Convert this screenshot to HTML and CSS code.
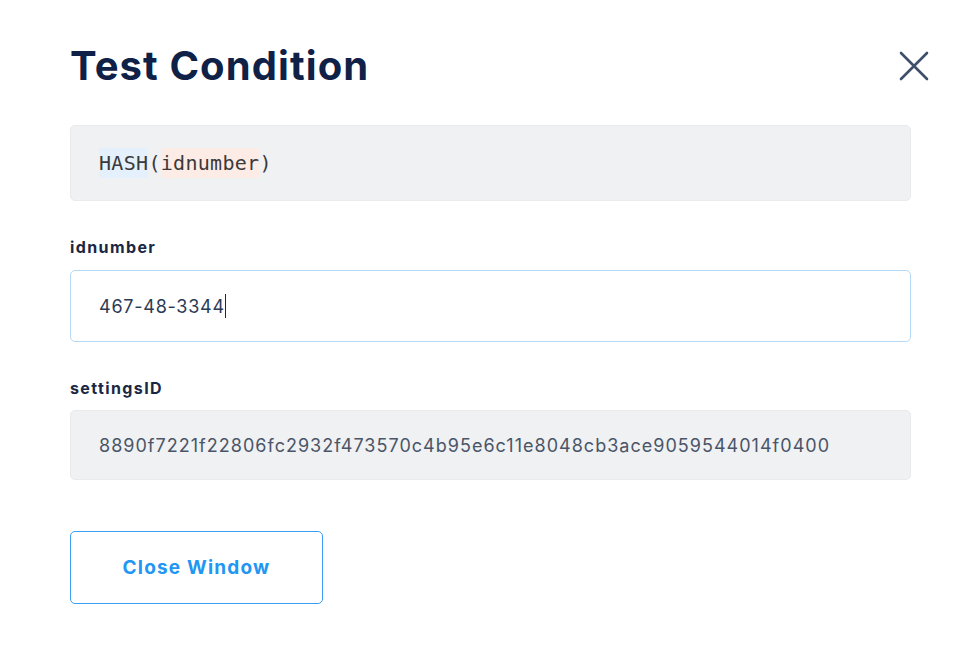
FILE: index.html
```html
<!DOCTYPE html>
<html lang="en">
<head>
<meta charset="utf-8">
<title>Test Condition</title>
<link rel="stylesheet" href="styles.css">
</head>
<body>
<div class="dialog">
  <div class="header">
    <h1 class="title">Test Condition</h1>
    <button class="close" aria-label="Close">
      <svg width="30" height="30" viewBox="0 0 30 30"><path d="M2 2 L28 28 M28 2 L2 28" stroke="#3d4f6b" stroke-width="2.6" stroke-linecap="round" fill="none"/></svg>
    </button>
  </div>
  <div class="code"><span class="fn">HASH</span>(<span class="arg">idnumber</span>)</div>
  <label class="label first">idnumber</label>
  <div class="input">467-48-3344<span class="caret"></span></div>
  <label class="label second">settingsID</label>
  <div class="readonly">8890f7221f22806fc2932f473570c4b95e6c11e8048cb3ace9059544014f0400</div>
  <div class="actions">
    <button class="btn">Close Window</button>
  </div>
</div>
</body>
</html>
```
FILE: styles.css
```css
html, body { margin: 0; padding: 0; background: #fff; }
body { font-family: Inter, "Open Sans", sans-serif; color: #1a2744; }
.dialog { padding: 38px 65px 0 70px; }
.header { display: flex; align-items: center; justify-content: space-between; margin-right: -18px; height: 56px; }
.title { margin: 0; font-size: 40px; font-weight: 700; color: #0f2147; letter-spacing: 1.1px; line-height: 56px; }
.close { background: none; border: 0; padding: 0; width: 30px; height: 30px; cursor: pointer; display: flex; }
.code { margin-top: 31px; height: 76px; box-sizing: border-box; background: #f0f1f3; border: 1px solid #e9eaec; border-radius: 5px; padding: 0 28px; display: flex; align-items: center; font-family: "DejaVu Sans Mono", monospace; font-size: 20px; letter-spacing: 0.3px; color: #3a3a3a; }
.fn { background: #e4f1fc; padding: 3px 0; }
.arg { background: #fdebe6; padding: 3px 0; border-radius: 3px; }
.label { display: block; font-size: 16px; font-weight: 700; color: #1a2744; line-height: 20px; letter-spacing: 1.4px; }
.label.first { margin-top: 36px; }
.label.second { margin-top: 36px; }
.input { margin-top: 13px; height: 72px; box-sizing: border-box; border: 1px solid #b6daf6; border-radius: 5px; padding: 0 28px; display: flex; align-items: center; font-size: 18px; letter-spacing: 0.75px; color: #2b3a55; }
.caret { display: inline-block; width: 1px; height: 24px; background: #1a2744; }
.readonly { margin-top: 12px; height: 70px; box-sizing: border-box; background: #f0f1f3; border: 1px solid #e9eaec; border-radius: 5px; padding: 0 28px; display: flex; align-items: center; font-size: 18px; letter-spacing: 1.02px; color: #4a5568; }
.actions { margin-top: 51px; }
.btn { width: 253px; height: 73px; background: #fff; border: 1px solid #3a9ff0; border-radius: 5px; font-family: Inter, sans-serif; font-size: 19px; font-weight: 700; letter-spacing: 1.2px; color: #2196f3; cursor: pointer; }
```
